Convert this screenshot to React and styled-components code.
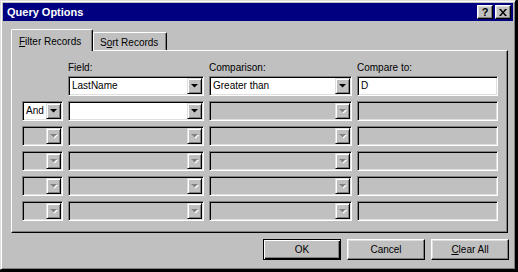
import React from 'react';
import styled, { createGlobalStyle } from 'styled-components';

const Global = createGlobalStyle`
  html, body { margin: 0; padding: 0; background: #000; }
  body {
    width: 518px; height: 272px; overflow: hidden;
    font-family: "Liberation Sans", Arial, sans-serif;
    font-size: 10px; color: #000;
  }
`;

const Window = styled.div`
  box-sizing: border-box;
  width: 516px;
  height: 270px;
  background: #c0c0c0;
  border: 1px solid;
  border-color: #dfdfdf #000 #000 #dfdfdf;
  box-shadow: inset 1px 1px #fff, inset -1px -1px #808080;
  padding: 2px;
  display: flex;
  flex-direction: column;
`;

const TitleBar = styled.div`
  height: 18px;
  background: #000080;
  display: flex;
  align-items: center;
  padding: 0 2px 0 4px;
  flex: none;
`;

const Title = styled.div`
  color: #fff;
  font-weight: bold;
  font-size: 11px;
  line-height: 14px;
  flex: 1;
`;

const TitleButtons = styled.div`
  display: flex;
  gap: 2px;
`;

const CapButton = styled.div`
  box-sizing: border-box;
  width: 16px;
  height: 14px;
  background: #c0c0c0;
  border: 1px solid;
  border-color: #fff #000 #000 #fff;
  box-shadow: inset -1px -1px #808080, inset 1px 1px #dfdfdf;
  display: flex;
  align-items: center;
  justify-content: center;
  font-weight: bold;
  font-size: 11px;
  line-height: 12px;
`;

const Body = styled.div`
  padding: 8px 0 0 8px;
  display: flex;
  flex-direction: column;
`;

const TabRow = styled.div`
  display: flex;
  align-items: flex-end;
  height: 21px;
`;

const Tab = styled.div`
  box-sizing: border-box;
  position: relative;
  height: ${p => (p.$active ? '22px' : '18px')};
  margin-bottom: ${p => (p.$active ? '-1px' : '0')};
  z-index: ${p => (p.$active ? 1 : 0)};
  width: ${p => p.$w}px;
  background: #c0c0c0;
  border-top: 1px solid #fff;
  border-left: 1px solid #fff;
  border-right: 1px solid #000;
  border-top-left-radius: 2px;
  border-top-right-radius: 2px;
  box-shadow: inset -1px 0 #808080;
  padding: ${p => (p.$active ? '6px 0 0 7px' : '4px 0 0 6px')};
  line-height: 12px;
  white-space: nowrap;
`;

const Panel = styled.div`
  box-sizing: border-box;
  width: 497px;
  height: 183px;
  border: 1px solid;
  border-color: #fff #000 #000 #fff;
  box-shadow: inset -1px -1px #808080;
  padding: 11px 0 0 10px;
`;

const Grid = styled.div`
  display: grid;
  grid-template-columns: 41px 136px 143px 141px;
  column-gap: 5px;
`;

const LabelRow = styled(Grid)`
  height: 12px;
  line-height: 12px;
  margin-bottom: 2px;
`;

const Rows = styled(Grid)`
  grid-auto-rows: 20px;
  row-gap: 5px;
`;

const Field = styled.div`
  box-sizing: border-box;
  height: 20px;
  border: 1px solid;
  border-color: #808080 #fff #fff #808080;
  box-shadow: inset 1px 1px #000, inset -1px -1px #dfdfdf;
  padding: 1px;
  background: ${p => (p.$disabled ? '#c0c0c0' : '#fff')};
  display: flex;
  align-items: center;
`;

const FieldText = styled.span`
  flex: 1;
  padding-left: 2px;
  line-height: 16px;
  white-space: nowrap;
  overflow: hidden;
`;

const DropButton = styled.div`
  box-sizing: border-box;
  width: 15px;
  height: 16px;
  flex: none;
  background: #c0c0c0;
  border: 1px solid;
  border-color: #dfdfdf #000 #000 #dfdfdf;
  box-shadow: inset 1px 1px #fff, inset -1px -1px #808080;
  display: flex;
  align-items: center;
  justify-content: center;
`;

const ButtonRow = styled.div`
  display: flex;
  justify-content: flex-end;
  gap: 6px;
  margin-top: 6px;
  padding-right: 4px;
`;

const Button = styled.div`
  box-sizing: border-box;
  width: 78px;
  height: 21px;
  background: #c0c0c0;
  border: 1px solid;
  border-color: ${p => (p.$default ? '#000' : '#fff #000 #000 #fff')};
  box-shadow: ${p =>
    p.$default
      ? 'inset 1px 1px #fff, inset -1px -1px #000, inset -2px -2px #808080'
      : 'inset -1px -1px #808080, inset 1px 1px #dfdfdf'};
  display: flex;
  align-items: center;
  justify-content: center;
  line-height: 12px;
`;

const Arrow = ({ disabled }) => (
  <svg width="8" height="5" viewBox="0 0 8 5">
    {disabled && <path d="M1 1h7L4.5 4.5z" fill="#fff" />}
    <path d="M0 0h7L3.5 3.5z" fill={disabled ? '#808080' : '#000'} />
  </svg>
);

const Combo = ({ value, disabled }) => (
  <Field $disabled={disabled}>
    <FieldText>{value}</FieldText>
    <DropButton>
      <Arrow disabled={disabled} />
    </DropButton>
  </Field>
);

const rows = [
  { conj: null, field: 'LastName', cmp: 'Greater than', to: 'D', enabled: true },
  { conj: 'And', field: '', cmp: '', to: '', enabled: 'partial' },
  { conj: '', field: '', cmp: '', to: '', enabled: false },
  { conj: '', field: '', cmp: '', to: '', enabled: false },
  { conj: '', field: '', cmp: '', to: '', enabled: false },
  { conj: '', field: '', cmp: '', to: '', enabled: false },
];

export default function App() {
  return (
    <>
      <Global />
      <Window>
        <TitleBar>
          <Title>Query Options</Title>
          <TitleButtons>
            <CapButton>?</CapButton>
            <CapButton>
              <svg width="8" height="7" viewBox="0 0 8 7">
                <path d="M0 0h2l2 2.5L6 0h2L5 3.5 8 7H6L4 4.5 2 7H0l3-3.5z" fill="#000" />
              </svg>
            </CapButton>
          </TitleButtons>
        </TitleBar>
        <Body>
          <TabRow>
            <Tab $active $w={82}><u>F</u>ilter Records</Tab>
            <Tab $w={74}>S<u>o</u>rt Records</Tab>
          </TabRow>
          <Panel>
            <LabelRow>
              <span />
              <span>Field:</span>
              <span>Comparison:</span>
              <span>Compare to:</span>
            </LabelRow>
            <Rows>
              {rows.map((r, i) => (
                <React.Fragment key={i}>
                  {r.conj === null ? <span /> : <Combo value={r.conj} disabled={r.enabled !== 'partial'} />}
                  <Combo value={r.field} disabled={!r.enabled} />
                  <Combo value={r.cmp} disabled={r.enabled !== true} />
                  <Field $disabled={r.enabled !== true}>
                    <FieldText>{r.to}</FieldText>
                  </Field>
                </React.Fragment>
              ))}
            </Rows>
          </Panel>
          <ButtonRow>
            <Button $default>OK</Button>
            <Button>Cancel</Button>
            <Button><span><u>C</u>lear All</span></Button>
          </ButtonRow>
        </Body>
      </Window>
    </>
  );
}
